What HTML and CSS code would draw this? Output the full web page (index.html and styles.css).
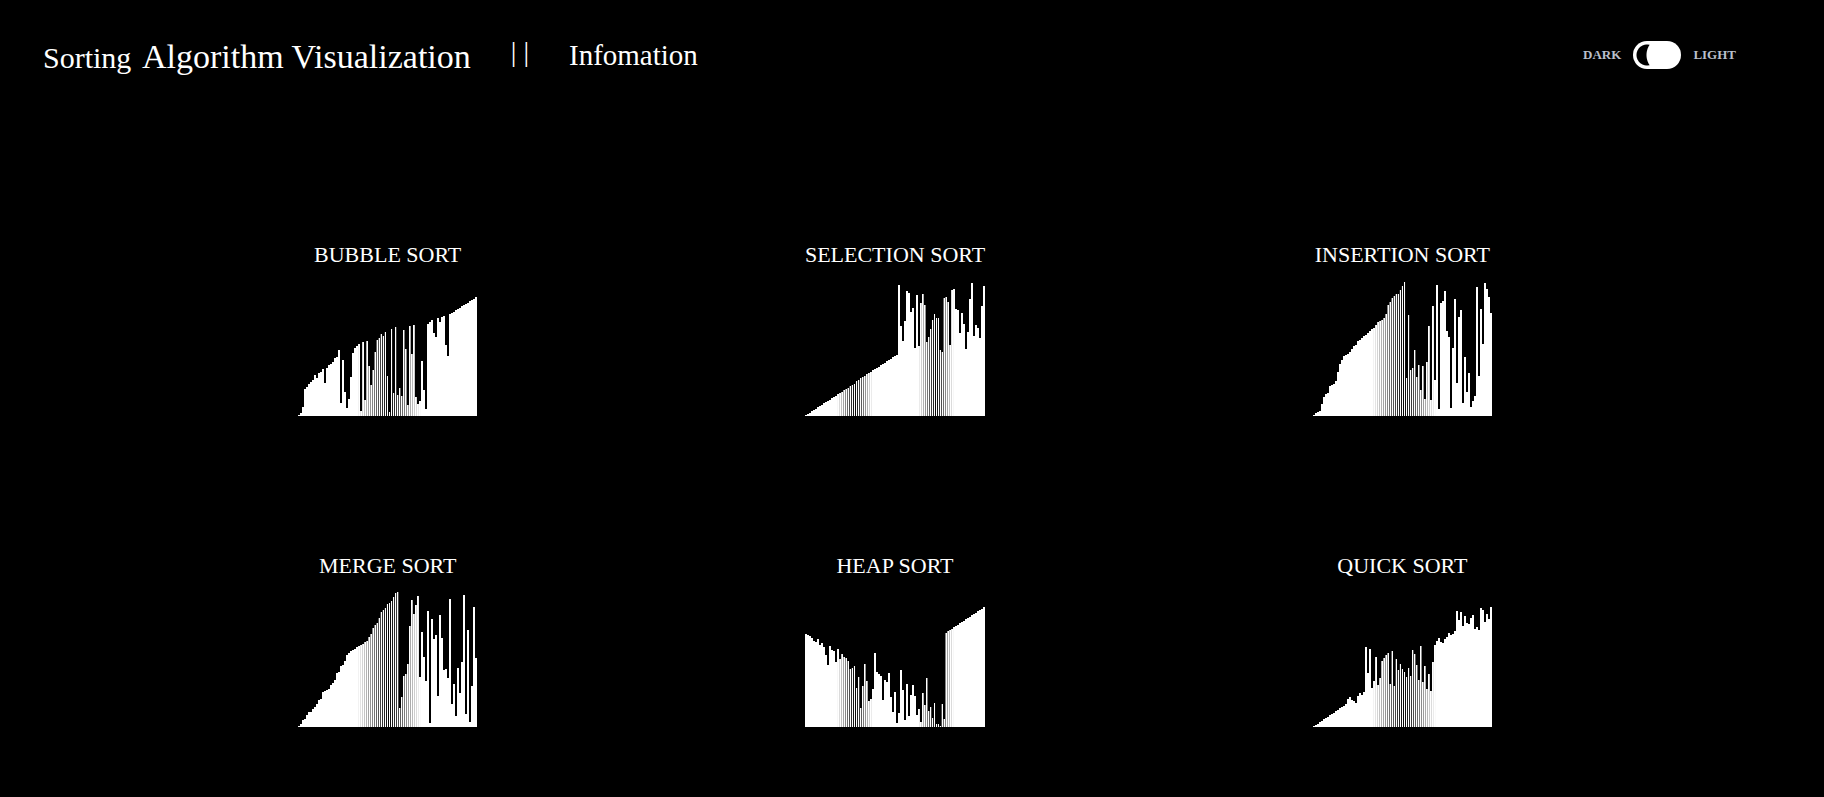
FILE: index.html
```html
<!DOCTYPE html>
<html lang="en">
<head>
<meta charset="utf-8">
<title>Sorting Algorithm Visualization</title>
<link rel="stylesheet" href="styles.css">
</head>
<body>
<header class="topbar">
  <h1 class="brand"><a href="#"><span class="brand-small">Sorting</span> Algorithm Visualization</a></h1>
  <span class="divider">| |</span>
  <nav><a class="nav-link" href="#info">Infomation</a></nav>
  <div class="theme">
    <label for="theme">DARK</label>
    <input class="switch" type="checkbox" id="theme">
    <label for="theme">LIGHT</label>
  </div>
</header>
<main class="grid">
  <a class="card" href="#bubble"><h2 class="title">BUBBLE SORT</h2><svg class="chart" data-name="bubble" height="136"></svg></a>
  <a class="card" href="#selection"><h2 class="title">SELECTION SORT</h2><svg class="chart" data-name="selection" height="136"></svg></a>
  <a class="card" href="#insertion"><h2 class="title">INSERTION SORT</h2><svg class="chart" data-name="insertion" height="136"></svg></a>
  <a class="card" href="#merge"><h2 class="title">MERGE SORT</h2><svg class="chart" data-name="merge" height="136"></svg></a>
  <a class="card" href="#heap"><h2 class="title">HEAP SORT</h2><svg class="chart" data-name="heap" height="136"></svg></a>
  <a class="card" href="#quick"><h2 class="title">QUICK SORT</h2><svg class="chart" data-name="quick" height="136"></svg></a>
</main>
<script src="charts.js"></script>
</body>
</html>
```
FILE: styles.css
```css
* { box-sizing: border-box; }

body {
  margin: 0;
  background: #000;
  color: #fff;
  font-family: "Liberation Serif", serif;
}

a { color: inherit; text-decoration: none; }

.topbar {
  display: flex;
  align-items: center;
  height: 110px;
  padding: 0 88px 0 43px;
}

.brand {
  margin: 4px 40px 0 0;
  font-size: 34px;
  font-weight: 400;
  line-height: 40px;
}

.brand-small {
  margin-right: 4px;
  font-size: 30px;
}

.divider {
  margin: 0 40px 6px 0;
  font-size: 28px;
}

.nav-link { font-size: 29px; }

.theme {
  display: flex;
  align-items: center;
  gap: 12px;
  margin-left: auto;
  color: #b9bfcc;
  font-size: 13px;
  font-weight: 700;
}

.switch {
  appearance: none;
  width: 48px;
  height: 28px;
  margin: 0;
  border-radius: 14px;
  background:
    radial-gradient(circle at 32px 14px, #fff 18px, transparent 19px),
    radial-gradient(circle at 14px 14px, #000 10px, #fff 11px);
}

.grid {
  display: grid;
  grid-template-columns: repeat(3, 1fr);
  row-gap: 120px;
  padding: 130px 168px 68px 134px;
}

.card {
  display: flex;
  flex-direction: column;
  align-items: center;
}

.title {
  margin: 0 0 10px;
  font-size: 22px;
  font-weight: 400;
  line-height: 30px;
}

.chart { display: block; height: 136px; margin-bottom: 15px; }
```
FILE: charts.js
```js
// Each chart lists the top edge of its bars, in thirds of a pixel, above a base line.
const ramp = (from, to, count) =>
  Array.from({ length: count }, (_, i) => from + (to - from) * i / (count - 1));

const single = { shifted: [46, 89], width: 179, centers: [91], reach: 32 };
const double = { shifted: [26, 66], width: 180, centers: [50, 131], reach: 18 };

const charts = {
  bubble: { ...single, base: 557, tops: [555,549,531,477,471,462,454,450,433,444,429,426,417,457,414,405,402,396,384,380,360,518,390,486,533,507,441,369,354,348,342,543,336,510,333,408,465,420,366,330,324,312,318,306,438,546,546,297,489,291,495,474,498,300,357,525,288,372,285,501,522,513,393,480,537,281,275,269,309,321,263,275,261,257,345,377,...ramp(252,201,14)] },
  selection: { ...double, base: 557, tops: [...ramp(555,373,47),165,288,332,273,183,189,245,232,353,195,348,219,192,225,336,321,297,269,252,264,360,366,204,201,216,345,180,177,237,240,309,249,282,356,306,207,159,318,285,293,324,228,168] },
  insertion: { ...single, base: 557, tops: [555,549,546,543,522,501,492,489,468,465,462,453,426,402,390,378,373,370,366,357,348,345,333,330,324,318,313,309,303,297,292,285,276,273,268,264,252,225,216,204,196,192,190,180,168,168,156,444,255,420,414,360,441,405,480,408,506,396,288,510,228,450,165,537,219,213,183,303,321,534,354,207,457,261,240,518,381,486,429,530,513,498,171,438,237,342,159,177,201,249] },
  merge: { ...single, base: 560, tops: [558,552,540,537,525,516,515,507,501,492,480,477,456,453,450,447,435,429,420,399,396,378,375,363,345,339,333,330,326,321,318,315,310,306,303,291,282,262,253,249,234,216,210,204,192,190,189,183,171,159,156,504,471,408,402,370,258,180,222,195,168,411,276,351,423,213,548,237,297,285,468,225,294,390,387,414,177,492,432,528,384,459,366,165,521,270,546,438,201,354] },
  heap: { ...double, base: 560, tops: [282,285,288,294,303,306,297,315,309,321,345,375,318,330,333,366,327,357,342,351,354,363,387,384,378,378,444,411,504,438,370,423,483,477,447,339,396,402,408,480,420,426,399,471,516,456,548,519,390,450,540,432,528,465,435,468,525,507,546,459,495,414,513,501,534,489,552,558,492,537,...ramp(277,201,20)] },
  quick: { ...single, base: 560, tops: [...ramp(558,492,17),477,471,480,483,489,468,459,465,456,321,399,327,444,423,351,435,414,363,354,345,339,432,333,438,357,390,372,387,387,396,411,384,408,330,342,375,420,318,426,378,447,402,452,366,315,303,294,306,309,297,291,277,285,282,273,213,240,216,258,228,249,252,234,225,265,261,270,204,209,246,222,237,201] }
};

const HEIGHT = 136;

document.querySelectorAll('.chart').forEach(svg => {
  const c = charts[svg.dataset.name];
  const left = i => i >= c.tops.length ? c.width : 2 * i - (i >= c.shifted[0] && i <= c.shifted[1] ? 1 : 0);
  let out = '';
  c.tops.forEach((top, i) => {
    const h = Math.round((c.base - top) / 3);
    out += `<rect x="${left(i)}" y="${HEIGHT - h}" width="${left(i + 1) - left(i)}" height="${h}" fill="#fff"/>`;
  });
  for (let x = 0; x < c.width; x += 2) {
    const d = Math.min(...c.centers.map(m => Math.abs(m - x - 0.5)));
    if (d < c.reach) out += `<rect x="${x}" y="0" width="1" height="${HEIGHT}" fill="#000" opacity="${(1 - d / c.reach).toFixed(2)}"/>`;
  }
  svg.setAttribute('width', c.width);
  svg.setAttribute('shape-rendering', 'crispEdges');
  svg.innerHTML = out;
});
```
